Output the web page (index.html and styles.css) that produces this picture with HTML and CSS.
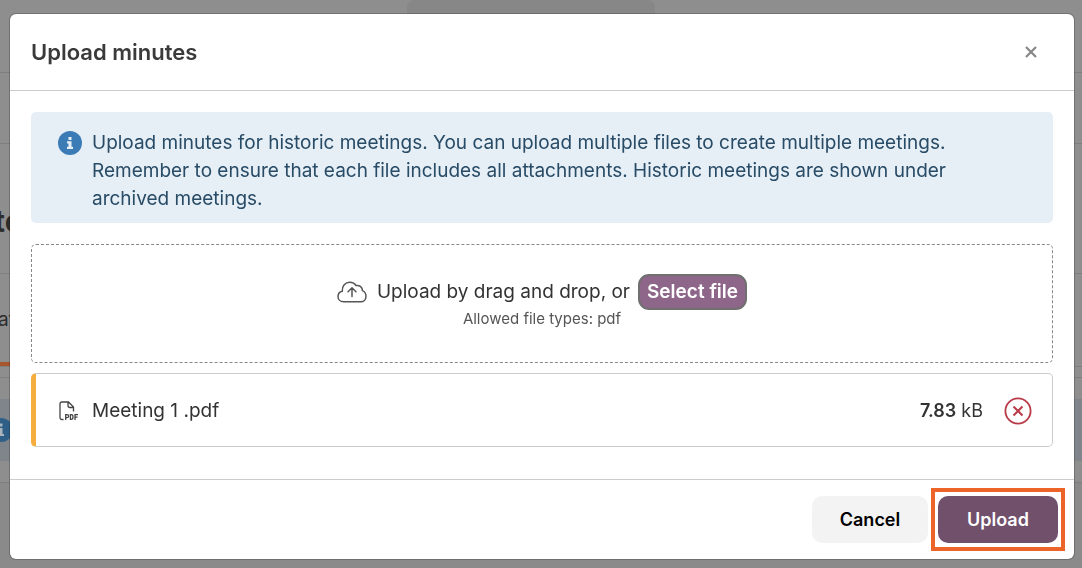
FILE: index.html
```
<!DOCTYPE html>
<html lang="en">
<head>
    <meta charset="UTF-8">
    <meta name="viewport" content="width=device-width, initial-scale=1.0">
    <title>Upload minutes</title>
    <link rel="stylesheet" href="styles.css">
</head>
<body>
    <!-- Dimmed page behind the modal -->
    <div class="page" aria-hidden="true">
        <div class="page-top"><div class="page-tab"></div></div>
        <div class="page-bar"></div>
        <div class="page-title">to</div>
        <div class="page-nav"><span>af</span></div>
        <div class="page-gap"></div>
        <div class="page-content">
            <div class="page-alert">
                <svg class="info-icon" viewBox="0 0 24 24"><circle cx="12" cy="12" r="12" fill="#2f5f86"/><path fill="#a9b4bc" d="M10.500 5.500h3v3h-3zM9 10h4.500v6H15v2H9v-2h1.500v-4H9z"/></svg>
            </div>
        </div>
    </div>

    <!-- Modal -->
    <div class="modal-wrap">
        <div class="modal" role="dialog" aria-labelledby="modalTitle">
            <div class="modal-header">
                <h1 id="modalTitle">Upload minutes</h1>
                <button type="button" class="close" aria-label="Close">
                    <svg width="12" height="12" viewBox="0 0 12 12"><path d="M1 1l10 10M11 1L1 11" stroke="#878787" stroke-width="2.200"/></svg>
                </button>
            </div>

            <div class="modal-body">
                <div class="alert">
                    <svg class="info-icon" viewBox="0 0 24 24"><circle cx="12" cy="12" r="12" fill="#3c7cb6"/><path fill="#e6eef6" d="M10.500 6h3v3h-3zM9 10.300h4.500v5.500H15V18H9v-2.200h1.500v-3.300H9z"/></svg>
                    <p>Upload minutes for historic meetings. You can upload multiple files to create multiple meetings. Remember to ensure that each file includes all attachments. Historic meetings are shown under archived meetings.</p>
                </div>

                <div class="dropzone">
                    <div class="drop-line">
                        <svg class="cloud" width="30" height="22" viewBox="0 0 30 22" fill="none" stroke="#555" stroke-width="1.500" stroke-linecap="round" stroke-linejoin="round"><path d="M6.500 20.800C3.300 20.800 1 18.500 1 15.500C1 12.800 2.800 10.800 5.300 10.200C4.800 5.200 8.300 1.200 12.800 1.200C15.700 1.200 17.800 2.600 19 4.600C22.300 3.800 25.300 6 25.400 9.600C27.600 10.500 29 12.700 29 15.200C29 18.400 26.800 20.800 23.800 20.800Z"/><path d="M15 15.500V7M11 10.800L15 6.800L19 10.800"/></svg>
                        <span>Upload by drag and drop, or</span>
                        <button type="button" class="select-file">Select file</button>
                    </div>
                    <p class="drop-hint">Allowed file types: pdf</p>
                </div>

                <div class="file">
                    <svg class="pdf-icon" width="20" height="20" viewBox="0 0 20 20" fill="none" stroke="#444" stroke-width="1.300"><path d="M4.500 18.500H3Q1 18.500 1 16.500V3Q1 1 3 1H9.500L14.500 6V10.500M9 1V4.500Q9 6.500 11 6.500H14.500"/><path d="M6.700 19V13.700H8Q9.600 13.700 9.600 15.200T8 16.700H6.700M11.400 13.700V18.400H12.200Q14 18.400 14 16T12.200 13.700ZM16 19V13.700H19M16 16.200H18.500"/></svg>
                    <span class="file-name">Meeting 1 .pdf</span>
                    <span class="file-size"><strong>7.83</strong> kB</span>
                    <button type="button" class="remove" aria-label="Remove file">
                        <svg width="28" height="28" viewBox="0 0 28 28" fill="none" stroke="#b93b48"><circle cx="14" cy="14" r="12.600" stroke-width="1.800"/><path d="M9.500 9.500l9 9M18.500 9.500l-9 9" stroke-width="2"/></svg>
                    </button>
                </div>
            </div>

            <div class="modal-footer">
                <button type="button" class="btn btn-cancel">Cancel</button>
                <div class="highlight">
                    <button type="button" class="btn btn-upload">Upload</button>
                </div>
            </div>
        </div>
    </div>
</body>
</html>
```
FILE: styles.css
```
/* Reset */
* {
    margin: 0;
    padding: 0;
    box-sizing: border-box;
}
body {
    font-family: Inter, "Open Sans", sans-serif;
    font-size: 19px;
    line-height: 28px;
    color: #333;
    background-color: #8a8a8a;
    overflow: hidden;
}
button {
    font: inherit;
    border: none;
    cursor: pointer;
}
svg {
    display: block;
    flex-shrink: 0;
}

/* Page behind */
.page {
    background-color: #8e8e8e;
    color: #2d2d2d;
}
.page > div {
    border-bottom: 1px solid #7f7f7f;
}
.page-top {
    height: 73px;
    display: flex;
    justify-content: center;
}
.page-tab {
    width: 248px;
    margin-right: 20px;
    border-radius: 8px 8px 0 0;
    background-color: #878787;
}
.page-bar {
    height: 71px;
}
.page-title {
    height: 130px;
    padding-top: 63px;
    font-size: 30px;
    font-weight: 700;
    text-indent: -6px;
}
.page-nav {
    display: flex;
    height: 93px;
}
.page-nav span {
    padding: 32px 20px 0 0;
    border-bottom: 4px solid #a8562d;
    text-indent: -2px;
}
.page-gap {
    height: 11px;
}
.page-content {
    height: 105px;
    padding-top: 21px;
}
.page-alert {
    height: 62px;
    padding-top: 19px;
    background-color: #7f858a;
}
.page-alert .info-icon {
    margin-left: -11px;
}

/* Modal */
.modal-wrap {
    position: fixed;
    top: 0;
    left: 0;
    width: 100%;
    padding: 13px 7px 0 9px;
}
.modal {
    background-color: #fff;
    background-clip: padding-box;
    border: 1px solid rgba(0, 0, 0, 0.2);
    border-radius: 7px;
}
.modal-header {
    display: flex;
    justify-content: space-between;
    align-items: center;
    padding: 24px 35px 24px 21px;
    border-bottom: 1px solid #ccc;
}
h1 {
    font-size: 22px;
    font-weight: 600;
    line-height: 28px;
    color: #3a3a3a;
}
.close {
    padding: 2px;
    background: none;
}
.modal-body {
    padding: 21px 21px 32px;
}

/* Info box */
.info-icon {
    width: 24px;
    height: 24px;
}
.alert {
    display: flex;
    gap: 10px;
    padding: 17px 90px 10px 27px;
    margin-bottom: 21px;
    border-radius: 5px;
    background-color: #e6eef6;
    color: #284b66;
}
.alert .info-icon {
    margin-top: 2px;
}

/* Drop area */
.dropzone {
    display: flex;
    flex-direction: column;
    align-items: center;
    padding: 29px 20px 35px;
    margin-bottom: 10px;
    border: 1px dashed #888;
    border-radius: 5px;
}
.drop-line {
    display: flex;
    align-items: center;
}
.cloud {
    margin-right: 10px;
}
.select-file {
    height: 36px;
    padding: 0 7px;
    margin-left: 8px;
    border: 2px solid #707070;
    border-radius: 11px;
    background-color: #8d6689;
    color: #fff;
    font-weight: 600;
    line-height: 24px;
}
.drop-hint {
    font-size: 15px;
    line-height: 17px;
    color: #555;
}

/* File row */
.file {
    display: flex;
    align-items: center;
    padding: 23px 20px 21px 23px;
    border: 1px solid #ccc;
    border-left: 5px solid #f5ad3d;
    border-radius: 5px;
}
.pdf-icon {
    margin-right: 13px;
}
.file-name {
    flex: 1;
}
.file-size {
    margin-right: 21px;
    font-size: 18px;
}
.file-size strong {
    font-weight: 600;
}
.remove {
    background: none;
}

/* Footer */
.modal-footer {
    display: flex;
    justify-content: flex-end;
    align-items: center;
    gap: 3px;
    padding: 8px 9px;
    border-top: 1px solid #ccc;
}
.highlight {
    padding: 4px 3px;
    border: 4px solid #ec6428;
}
.btn {
    display: block;
    height: 47px;
    padding-top: 1px;
    border-radius: 10px;
    font-size: 18px;
    font-weight: 600;
}
.btn-cancel {
    width: 116px;
    background-color: #f3f3f3;
    color: #000;
}
.btn-upload {
    width: 120px;
    background-color: #70506b;
    color: #fff;
}
```
